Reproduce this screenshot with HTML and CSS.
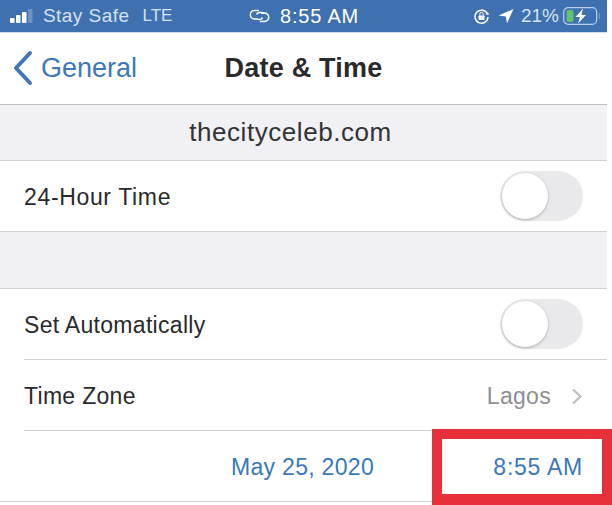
FILE: index.html
```html
<!DOCTYPE html>
<html lang="en">
<head>
    <meta charset="UTF-8">
    <meta name="viewport" content="width=device-width, initial-scale=1.0">
    <title>Date & Time</title>
    <link rel="stylesheet" href="styles.css">
</head>
<body>
    <div class="screen">
        <div class="status">
            <div class="status-left">
                <svg class="signal" width="24" height="14" viewBox="0 0 24 14">
                    <rect x="0" y="9" width="4.5" height="5" rx="1" fill="#fff"/>
                    <rect x="6" y="6" width="4.5" height="8" rx="1" fill="#fff"/>
                    <rect x="12" y="3" width="4.5" height="11" rx="1" fill="#fff"/>
                    <rect x="18" y="0" width="4.5" height="14" rx="1" fill="#6d92c4"/>
                </svg>
                <span class="carrier">Stay Safe</span>
                <span class="lte">LTE</span>
            </div>
            <div class="status-mid">
                <svg width="23" height="16" viewBox="0 0 23 16" fill="none" stroke="#fff" stroke-width="1.5">
                    <path d="M11 2.5H6.5a4.2 4.2 0 0 0 0 8.4H10"/>
                    <path d="M8.5 6.5a3 3 0 0 1 3-2h1.5a4 4 0 0 1 3 1"/>
                    <path d="M12 13.5h4.5a4.2 4.2 0 0 0 0-8.4H13"/>
                    <path d="M14.5 9.5a3 3 0 0 1-3 2H10"/>
                </svg>
                <span>8:55 AM</span>
            </div>
            <div class="status-right">
                <svg width="17" height="17" viewBox="0 0 17 17">
                    <path d="M14.5 6.2A6.5 6.5 0 1 0 15 9" fill="none" stroke="#fff" stroke-width="1.5"/>
                    <path d="M12.5 6.5h4l-2-2.6z" fill="#fff"/>
                    <rect x="5.5" y="7.5" width="6" height="4.5" rx="0.7" fill="#fff"/>
                    <path d="M6.8 7.5V6a1.7 1.7 0 0 1 3.4 0v1.5" fill="none" stroke="#fff" stroke-width="1"/>
                </svg>
                <svg class="arrow" width="16" height="16" viewBox="0 0 16 16">
                    <path d="M15.5 1 0.5 7.6 7.8 8.4 9 15.5z" fill="#fff"/>
                </svg>
                <span>21%</span>
                <svg width="38" height="18" viewBox="0 0 38 18">
                    <rect x="0.7" y="0.7" width="33" height="16.6" rx="4.5" fill="none" stroke="#b9d0ea" stroke-width="1.2"/>
                    <rect x="3.5" y="3" width="7" height="12" rx="2" fill="#62c46a"/>
                    <path d="M20 1.5 12.5 10h4.5l-2 6.5L23 8h-4.5z" fill="#fff"/>
                    <rect x="35.5" y="6" width="1.5" height="6" rx="0.7" fill="#6d92c4"/>
                </svg>
            </div>
        </div>

        <div class="nav">
            <div class="back">
                <svg width="22" height="36" viewBox="0 0 22 36" fill="none" stroke="#3d78b8" stroke-width="4" stroke-linecap="round" stroke-linejoin="round">
                    <path d="M18 3 4 18l14 15"/>
                </svg>
                <span>General</span>
            </div>
            <div class="nav-title">Date &amp; Time</div>
        </div>

        <div class="band band-text">thecityceleb.com</div>

        <div class="row row-last">
            <span class="wide">24-Hour Time</span>
            <div class="toggle"><div class="knob"></div></div>
        </div>

        <div class="band band-tall"></div>

        <div class="group">
            <div class="row">
                <span>Set Automatically</span>
                <div class="toggle"><div class="knob"></div></div>
            </div>
            <div class="row">
                <span>Time Zone</span>
                <div class="zone">
                    <span>Lagos</span>
                    <svg width="12" height="17" viewBox="0 0 12 17" fill="none" stroke="#bdbdc1" stroke-width="2.2">
                        <path d="M2 1.5 9.5 8.5 2 15.5"/>
                    </svg>
                </div>
            </div>
            <div class="row row-picker">
                <span class="date">May 25, 2020</span>
                <span class="time">8:55 AM</span>
            </div>
        </div>

        <div class="highlight"></div>
    </div>
</body>
</html>
```

FILE: styles.css
```css
html, body {
    margin: 0;
    padding: 0;
}
body {
    font-family: "Liberation Sans", Arial, sans-serif;
    background: #fff;
}
.screen {
    position: relative;
    width: 612px;
    height: 505px;
    overflow: hidden;
    box-sizing: border-box;
    padding-right: 5px;
    color: #2a2a2c;
}
.status {
    height: 33px;
    box-sizing: border-box;
    background: #3f70b0;
    color: #d5e2f2;
    display: flex;
    align-items: center;
    padding: 0 6px 0 10px;
    font-size: 19px;
    border-bottom: 1px solid #cfe2f5;
}
.status-left, .status-mid, .status-right {
    display: flex;
    align-items: center;
}
.status-left {
    width: 238px;
}
.signal {
    margin-right: 9px;
}
.carrier {
    letter-spacing: 0.45px;
}
.lte {
    margin-left: 13px;
    font-size: 17px;
}
.status-mid {
    gap: 9px;
    color: #fff;
    font-size: 20px;
    letter-spacing: 0.8px;
}
.status-right {
    gap: 8px;
    font-size: 19px;
    margin-left: auto;
}
.status-right span {
    margin-right: -4px;
    margin-left: -1px;
}
.nav {
    position: relative;
    height: 72px;
    display: flex;
    align-items: center;
    justify-content: center;
    border-bottom: 1px solid #bfbfc3;
    box-sizing: border-box;
}
.back {
    position: absolute;
    left: 12px;
    top: 17px;
    display: flex;
    align-items: center;
    gap: 7px;
    color: #3d78b8;
    font-size: 27px;
}
.nav-title {
    font-size: 27px;
    font-weight: bold;
    letter-spacing: 0.2px;
}
.band {
    height: 56px;
    background: #f0f0f5;
    border-bottom: 1px solid #d3d3d6;
    box-sizing: border-box;
}
.band-tall {
    height: 57px;
}
.band-text {
    display: flex;
    align-items: center;
    justify-content: center;
    font-size: 26px;
    color: #333;
    letter-spacing: 0.55px;
    padding-right: 26px;
}
.row {
    height: 71px;
    box-sizing: border-box;
    margin-left: 24px;
    padding: 2px 24px 0 0;
    display: flex;
    align-items: center;
    justify-content: space-between;
    font-size: 23px;
    letter-spacing: 0.3px;
    border-bottom: 1px solid #d3d3d6;
}
.row-last {
    margin-left: 0;
    padding-left: 24px;
}
.wide {
    letter-spacing: 0.65px;
}
.group .row:last-child {
    margin-left: 0;
}
.toggle {
    width: 83px;
    height: 50px;
    border-radius: 25px;
    background: #e9e9eb;
    flex-shrink: 0;
    margin-top: -2px;
}
.knob {
    width: 46px;
    height: 46px;
    margin: 2px;
    border-radius: 50%;
    background: #fff;
    box-shadow: 0 1px 3px rgba(0, 0, 0, 0.25);
}
.zone {
    display: flex;
    align-items: center;
    gap: 20px;
    color: #8e8e93;
}
.row-picker {
    justify-content: flex-start;
    color: #3a78bc;
    padding-left: 231px;
}
.time {
    margin-left: auto;
    letter-spacing: 0.75px;
}
.highlight {
    position: absolute;
    left: 432px;
    top: 429px;
    width: 180px;
    height: 76px;
    box-sizing: border-box;
    border: 10px solid #e8303a;
    border-bottom-width: 11px;
}
```
